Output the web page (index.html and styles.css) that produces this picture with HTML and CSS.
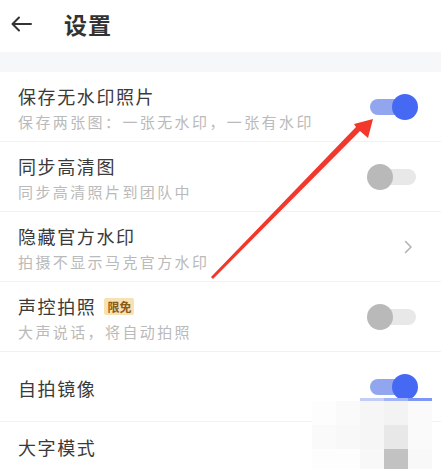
FILE: index.html
```html
<!DOCTYPE html>
<html lang="zh-CN">
<head>
    <meta charset="UTF-8">
    <meta name="viewport" content="width=device-width, initial-scale=1.0">
    <title>设置</title>
    <link rel="stylesheet" href="styles.css">
</head>
<body>
    <div class="page">
        <div class="header">
            <svg class="back" width="22" height="16" viewBox="0 0 22 16">
                <path d="M21 8H2.5M9 1.5L2.5 8L9 14.5" fill="none" stroke="#333" stroke-width="2" stroke-linecap="round" stroke-linejoin="round"/>
            </svg>
            <h1>设置</h1>
        </div>
        <div class="band"></div>

        <div class="list">
            <div class="row">
                <div class="text">
                    <div class="title">保存无水印照片</div>
                    <div class="sub">保存两张图：一张无水印，一张有水印</div>
                </div>
                <div class="switch on"><span class="track"></span><span class="knob"></span></div>
            </div>
            <div class="row">
                <div class="text">
                    <div class="title">同步高清图</div>
                    <div class="sub">同步高清照片到团队中</div>
                </div>
                <div class="switch"><span class="track"></span><span class="knob"></span></div>
            </div>
            <div class="row">
                <div class="text">
                    <div class="title">隐藏官方水印</div>
                    <div class="sub">拍摄不显示马克官方水印</div>
                </div>
                <div class="action">
                    <svg class="chev" width="12" height="14" viewBox="0 0 12 14">
                        <path d="M3.5 1.5L9 7L3.5 12.5" fill="none" stroke="#b3b3b3" stroke-width="1.6" stroke-linecap="round" stroke-linejoin="round"/>
                    </svg>
                </div>
            </div>
            <div class="row">
                <div class="text">
                    <div class="title">声控拍照<span class="badge">限免</span></div>
                    <div class="sub">大声说话，将自动拍照</div>
                </div>
                <div class="switch"><span class="track"></span><span class="knob"></span></div>
            </div>
            <div class="row">
                <div class="text">
                    <div class="title">自拍镜像</div>
                </div>
                <div class="switch on"><span class="track"></span><span class="knob"></span></div>
            </div>
            <div class="row row-top">
                <div class="text">
                    <div class="title">大字模式</div>
                </div>
            </div>
        </div>

        <!-- 马赛克水印 -->
        <div class="mosaic">
            <span class="e"></span><span class="e"></span><span class="b1"></span><span class="b2"></span><span class="b3"></span>
            <span class="c1"></span><span class="c2"></span><span class="c4"></span><span class="c5"></span><span class="c2"></span>
            <span class="c2"></span><span class="c3"></span><span class="c4"></span><span class="c6"></span><span class="c2"></span>
            <span class="c1"></span><span class="c1"></span><span class="c3"></span><span class="c7"></span><span class="c3"></span>
        </div>

        <!-- 红色箭头 -->
        <svg class="arrow" width="441" height="469" viewBox="0 0 441 469">
            <polygon points="211,277 356,127 354,124 373,119 368,138 360,131 213,279" fill="#f2382c"/>
        </svg>
    </div>
</body>
</html>
```

FILE: styles.css
```css
body {
    margin: 0;
    padding: 0;
    background-color: #fff;
    font-family: "Noto Sans CJK SC", "Noto Sans", sans-serif;
    overflow: hidden;
}
.page {
    position: relative;
    width: 441px;
    height: 469px;
    overflow: hidden;
}
.header {
    height: 52px;
    box-sizing: border-box;
    display: flex;
    align-items: center;
    padding: 0 0 5px 10px;
}
.back {
    display: block;
    margin-top: 1px;
}
h1 {
    margin: 0 0 0 32px;
    font-size: 23px;
    font-weight: 700;
    letter-spacing: 1px;
    color: #333;
    line-height: 30px;
}
.band {
    height: 20px;
    background-color: #f6f7f9;
}
.row {
    height: 70px;
    box-sizing: border-box;
    display: flex;
    align-items: center;
    justify-content: space-between;
    padding: 0 23px 0 18px;
    border-bottom: 1px solid #f2f2f2;
}
.row-top {
    align-items: flex-start;
    padding-top: 9px;
}
.text {
    padding-top: 3px;
}
.title {
    font-size: 18px;
    letter-spacing: 1.6px;
    line-height: 27px;
    color: #3a3a3a;
    display: flex;
    align-items: center;
}
.sub {
    font-size: 15px;
    letter-spacing: 2.4px;
    line-height: 24px;
    color: #bababa;
}
.badge {
    margin-left: 8px;
    background-color: #f8e1b2;
    color: #8a5a1a;
    font-size: 12px;
    line-height: 17px;
    letter-spacing: 0;
    padding: 0 3px;
    border-radius: 2px;
    font-weight: 700;
}
.switch {
    position: relative;
    width: 51px;
    height: 26px;
}
.track {
    position: absolute;
    left: 3px;
    right: 2px;
    top: 5px;
    height: 16px;
    border-radius: 8px;
    background-color: #e8e8e8;
}
.knob {
    position: absolute;
    left: 0;
    top: 0;
    width: 26px;
    height: 26px;
    border-radius: 50%;
    background-color: #b9b9b9;
}
.switch.on .track {
    background-color: #91a6ee;
}
.switch.on .knob {
    left: auto;
    right: 0;
    background-color: #4569f2;
}
.action {
    width: 51px;
    display: flex;
    justify-content: flex-end;
}
.chev {
    display: block;
    margin-right: 4px;
}
.mosaic {
    position: absolute;
    left: 312px;
    top: 398px;
    display: grid;
    grid-template-columns: repeat(5, 24px);
    grid-template-rows: 3px 24px 24px 24px;
}
.mosaic span { display: block; }
.mosaic .e { background-color: transparent; }
.mosaic .b1 { background-color: #c3cdf7; }
.mosaic .b2 { background-color: #a2b5f6; }
.mosaic .b3 { background-color: #7e97f4; }
.mosaic .c1 { background-color: #fdfdfd; }
.mosaic .c2 { background-color: #fafafa; }
.mosaic .c3 { background-color: #f8f8f8; }
.mosaic .c4 { background-color: #f6f6f6; }
.mosaic .c5 { background-color: #f3f3f3; }
.mosaic .c6 { background-color: #e8e8e8; }
.mosaic .c7 { background-color: #c2c2c2; }
.arrow {
    position: absolute;
    left: 0;
    top: 0;
    pointer-events: none;
}
```
